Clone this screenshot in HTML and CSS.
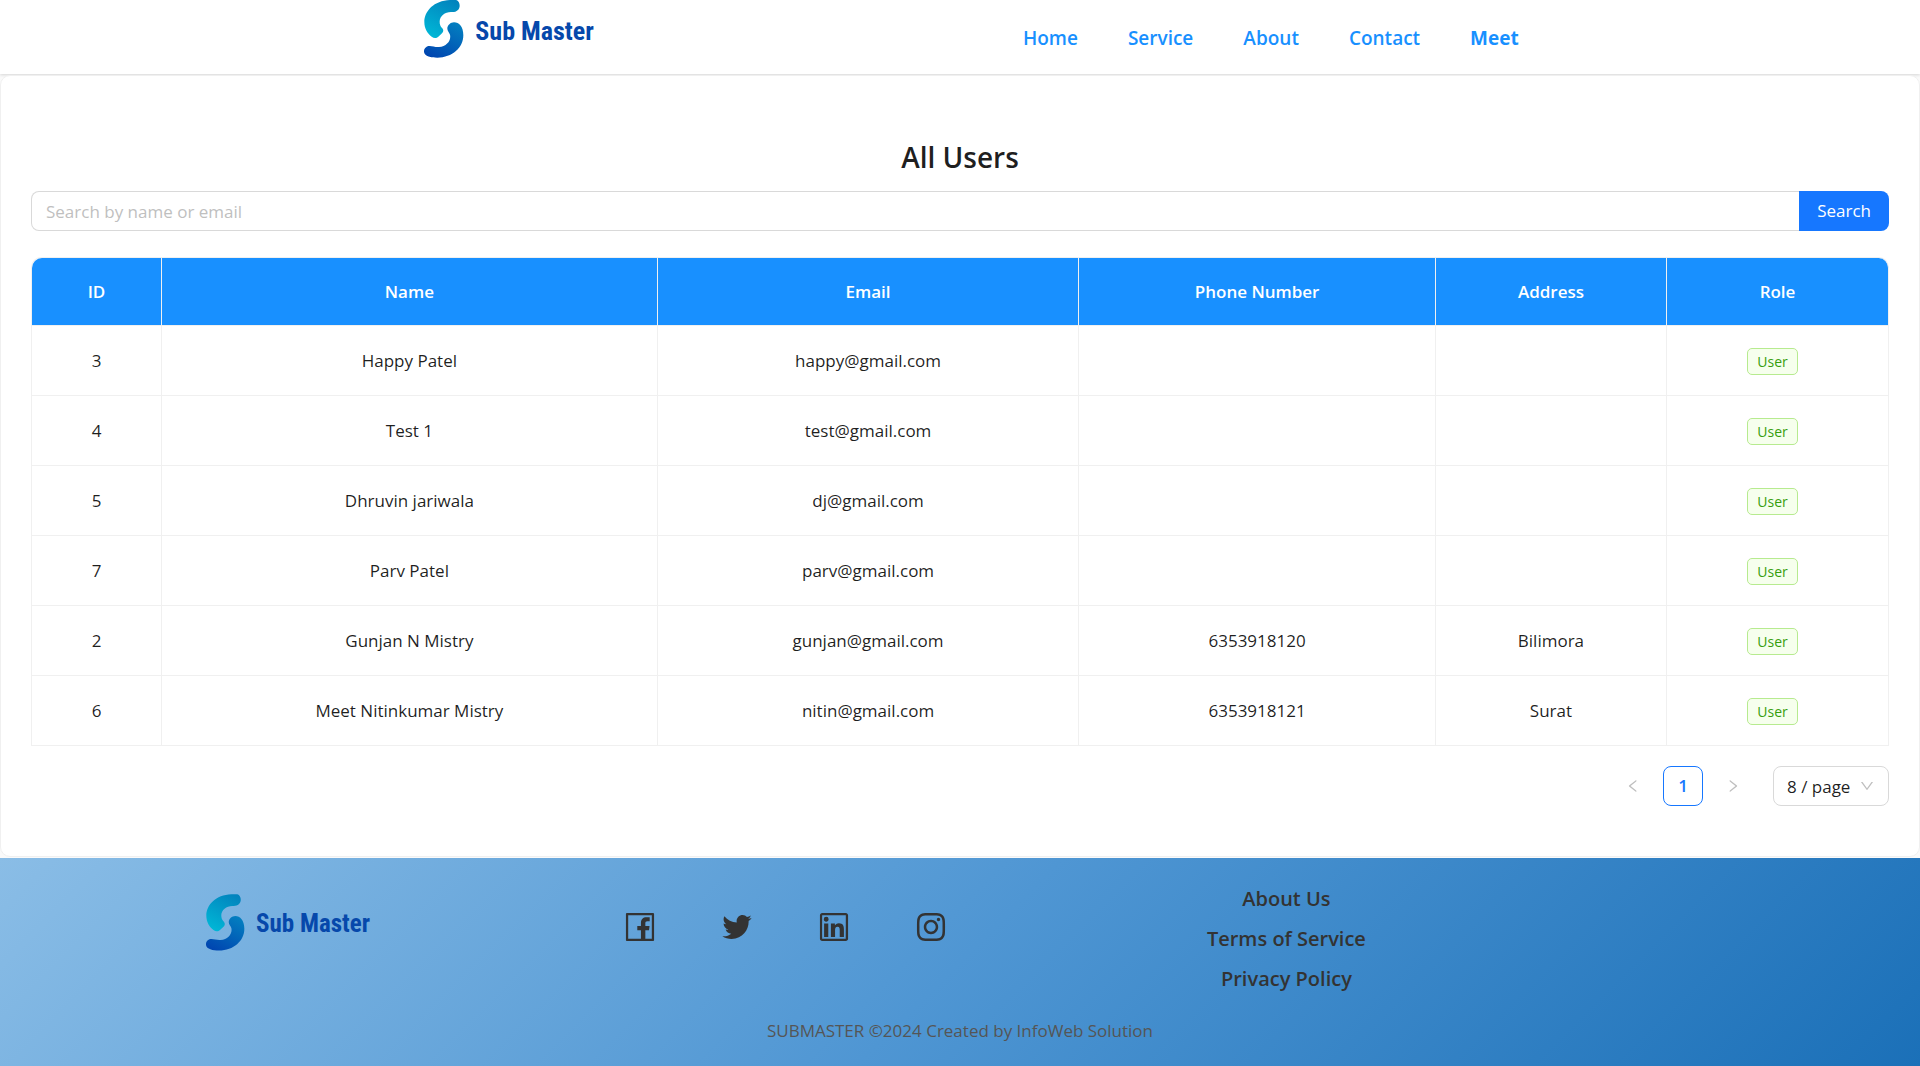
FILE: index.html
```html
<!DOCTYPE html>
<html lang="en">
<head>
<meta charset="utf-8">
<title>Sub Master - All Users</title>
<meta name="viewport" content="width=device-width, initial-scale=1">
<link rel="stylesheet" href="styles.css">
</head>
<body>
<svg class="sprite" aria-hidden="true">
  <defs>
    <linearGradient id="mark-top" x1="0.8" y1="0" x2="0.3" y2="1"><stop offset="0" stop-color="#0283bd"/><stop offset="1" stop-color="#00b6d6"/></linearGradient>
    <linearGradient id="mark-bottom" x1="0.8" y1="0" x2="0.2" y2="1"><stop offset="0" stop-color="#037fc0"/><stop offset="1" stop-color="#0045b0"/></linearGradient>
    <symbol id="mark" viewBox="0 0 120 174">
      <path fill="url(#mark-top)" d="M93 0H78C30 2 1 33 1 66c0 20 10 35 22 44 7 6 15 5 20 0l11-10c5-5 5-10 1-15-6-6-8-12-8-20 0-17 17-30 36-29 14 1 24-7 24-19C107 6 101 0 93 0Z"/>
      <path fill="url(#mark-bottom)" d="M90 67c-10 0-20 9-20 19 0 7 6 11 8 18 4 18-10 35-33 37-11 1-19-3-28-3C7 138-1 146 0 156c2 13 21 17 40 17 45 0 78-30 78-67 0-26-13-39-28-39Z"/>
    </symbol>
  </defs>
</svg>

<header class="site-header">
  <a class="logo" href="#"><svg class="logo-mark" aria-hidden="true"><use href="#mark"/></svg><span class="logo-name">Sub Master</span></a>
  <nav class="site-nav">
    <a href="#">Home</a>
    <a href="#">Service</a>
    <a href="#">About</a>
    <a href="#">Contact</a>
    <a class="account" href="#">Meet</a>
  </nav>
</header>

<main class="card">
  <h1>All Users</h1>
  <form class="search">
    <input type="search" aria-label="Search by name or email" placeholder="Search by name or email">
    <button type="button">Search</button>
  </form>
  <table class="users">
    <colgroup><col class="c-id"><col class="c-name"><col class="c-email"><col class="c-phone"><col class="c-address"><col class="c-role"></colgroup>
    <thead>
      <tr><th>ID</th><th>Name</th><th>Email</th><th>Phone Number</th><th>Address</th><th>Role</th></tr>
    </thead>
    <tbody>
      <tr><td>3</td><td>Happy Patel</td><td>happy@gmail.com</td><td></td><td></td><td><span class="tag">User</span></td></tr>
      <tr><td>4</td><td>Test 1</td><td>test@gmail.com</td><td></td><td></td><td><span class="tag">User</span></td></tr>
      <tr><td>5</td><td>Dhruvin jariwala</td><td>dj@gmail.com</td><td></td><td></td><td><span class="tag">User</span></td></tr>
      <tr><td>7</td><td>Parv Patel</td><td>parv@gmail.com</td><td></td><td></td><td><span class="tag">User</span></td></tr>
      <tr><td>2</td><td>Gunjan N Mistry</td><td>gunjan@gmail.com</td><td>6353918120</td><td>Bilimora</td><td><span class="tag">User</span></td></tr>
      <tr><td>6</td><td>Meet Nitinkumar Mistry</td><td>nitin@gmail.com</td><td>6353918121</td><td>Surat</td><td><span class="tag">User</span></td></tr>
    </tbody>
  </table>
  <div class="pagination">
    <button type="button" class="page-step" aria-label="Previous page" disabled><svg viewBox="0 0 1024 1024"><path d="M724 218.3V141c0-6.7-7.7-10.4-12.9-6.3L260.3 486.8a31.86 31.86 0 000 50.3l450.8 352.1c5.3 4.1 12.9.4 12.9-6.3v-77.3c0-4.9-2.3-9.6-6.1-12.6l-360-281 360-281.1c3.8-3 6.1-7.7 6.1-12.6z"/></svg></button>
    <button type="button" class="page-current">1</button>
    <button type="button" class="page-step" aria-label="Next page" disabled><svg viewBox="0 0 1024 1024"><path d="M765.7 486.8L314.9 134.7A7.97 7.97 0 00302 141v77.3c0 4.9 2.3 9.6 6.1 12.6l360 281.1-360 281.1c-3.9 3-6.1 7.7-6.1 12.6V883c0 6.7 7.7 10.4 12.9 6.3l450.8-352.1a31.96 31.96 0 000-50.4z"/></svg></button>
    <div class="page-size">
      <select aria-label="Rows per page"><option>8 / page</option></select>
      <svg viewBox="0 0 1024 1024" aria-hidden="true"><path d="M884 256h-75c-5.1 0-9.9 2.5-12.9 6.6L512 654.2 227.9 262.6c-3-4.1-7.8-6.6-12.9-6.6h-75c-6.5 0-10.3 7.4-6.5 12.7l352.6 486.1c12.8 17.6 39 17.6 51.7 0l352.6-486.1c3.9-5.3.1-12.7-6.4-12.7z"/></svg>
    </div>
  </div>
</main>

<footer class="site-footer">
  <div class="footer-columns">
    <a class="logo" href="#"><svg class="logo-mark" aria-hidden="true"><use href="#mark"/></svg><span class="logo-name">Sub Master</span></a>
    <div class="social">
      <a href="#" aria-label="Facebook"><svg viewBox="0 0 1024 1024"><path d="M880 112H144c-17.7 0-32 14.3-32 32v736c0 17.7 14.3 32 32 32h736c17.7 0 32-14.3 32-32V144c0-17.7-14.3-32-32-32zm-32 736H663.9V602.2h104l15.6-120.7H663.9v-77.1c0-35 9.7-58.8 59.8-58.8h63.9v-108c-11.1-1.5-49-4.8-93.2-4.8-92.2 0-155.3 56.3-155.3 159.6v89H434.9v120.7h104.3V848H176V176h672v672z"/></svg></a>
      <a href="#" aria-label="Twitter"><svg viewBox="0 0 1024 1024"><path d="M928 254.3c-30.6 13.2-63.9 22.7-98.2 26.4a170.1 170.1 0 0075-94 336.64 336.64 0 01-108.2 41.2A170.1 170.1 0 00672 174c-94.5 0-170.5 76.6-170.5 170.6 0 13.2 1.6 26.4 4.2 39.1-141.5-7.4-267.7-75-351.6-178.5a169.32 169.32 0 00-23.2 86.1c0 59.2 30.1 111.4 76 142.1a172 172 0 01-77.1-21.7v2.1c0 82.9 58.6 151.6 136.7 167.4a180.6 180.6 0 01-44.9 5.8c-11.1 0-21.6-1.1-32.2-2.6C211 652 273.9 701.1 348.8 702.7c-58.6 45.9-132 72.9-211.7 72.9-14.3 0-27.5-.5-41.2-2.1C171.5 822 261.2 850 357.8 850 671.4 850 843 590.2 843 364.7c0-7.4 0-14.8-.5-22.2 33.2-24.3 62.3-54.4 85.5-88.2z"/></svg></a>
      <a href="#" aria-label="LinkedIn"><svg viewBox="0 0 1024 1024"><path d="M847.7 112H176.3c-35.5 0-64.3 28.8-64.3 64.3v671.4c0 35.5 28.8 64.3 64.3 64.3h671.4c35.5 0 64.3-28.8 64.3-64.3V176.3c0-35.5-28.8-64.3-64.3-64.3zm0 736c-447.8-.1-671.7-.2-671.7-.3.1-447.8.2-671.7.3-671.7 447.8.1 671.7.2 671.7.3-.1 447.8-.2 671.7-.3 671.7zM230.6 411.9h118.7v381.8H230.6zm59.4-52.2c37.9 0 68.8-30.8 68.8-68.8a68.8 68.8 0 10-137.6 0c-.1 38 30.7 68.8 68.8 68.8zm252.3 245.1c0-49.8 9.5-98 71.2-98 60.8 0 61.7 56.9 61.7 101.2v185.7h118.6V584.3c0-102.8-22.2-181.9-142.3-181.9-57.7 0-96.4 31.7-112.3 61.7h-1.6v-52.2H423.7v381.8h118.6V604.8z"/></svg></a>
      <a href="#" aria-label="Instagram"><svg viewBox="0 0 1024 1024"><path d="M512 306.9c-113.5 0-205.1 91.6-205.1 205.1S398.5 717.1 512 717.1 717.1 625.5 717.1 512 625.5 306.9 512 306.9zm0 338.4c-73.4 0-133.3-59.9-133.3-133.3S438.6 378.7 512 378.7 645.3 438.6 645.3 512 585.4 645.3 512 645.3zm213.5-394.6c-26.5 0-47.9 21.4-47.9 47.9s21.4 47.9 47.9 47.9 47.9-21.3 47.9-47.9a47.84 47.84 0 00-47.9-47.9zM911.8 512c0-55.2.5-109.9-2.6-165-3.1-64-17.7-120.8-64.5-167.6-46.9-46.9-103.6-61.4-167.6-64.5-55.2-3.1-109.9-2.6-165-2.6-55.2 0-109.9-.5-165 2.6-64 3.1-120.8 17.7-167.6 64.5C132.6 226.3 118.1 283 115 347c-3.1 55.2-2.6 109.9-2.6 165s-.5 109.9 2.6 165c3.1 64 17.7 120.8 64.5 167.6 46.9 46.9 103.6 61.4 167.6 64.5 55.2 3.1 109.9 2.6 165 2.6 55.2 0 109.9.5 165-2.6 64-3.1 120.8-17.7 167.6-64.5 46.9-46.9 61.4-103.6 64.5-167.6 3.2-55.1 2.6-109.8 2.6-165zm-88 235.8c-7.3 18.2-16.1 31.8-30.2 45.8-14.1 14.1-27.6 22.9-45.8 30.2C695.2 844.7 570.3 840 512 840c-58.3 0-183.3 4.7-235.9-16.1-18.2-7.3-31.8-16.1-45.8-30.2-14.1-14.1-22.9-27.6-30.2-45.8C179.3 695.2 184 570.3 184 512c0-58.3-4.7-183.3 16.1-235.9 7.3-18.2 16.1-31.8 30.2-45.8s27.6-22.9 45.8-30.2C328.7 179.3 453.7 184 512 184s183.3-4.7 235.9 16.1c18.2 7.3 31.8 16.1 45.8 30.2 14.1 14.1 22.9 27.6 30.2 45.8C844.7 328.7 840 453.7 840 512c0 58.3 4.7 183.2-16.2 235.8z"/></svg></a>
    </div>
    <nav class="footer-links">
      <a href="#">About Us</a>
      <a href="#">Terms of Service</a>
      <a href="#">Privacy Policy</a>
    </nav>
  </div>
  <p class="copyright">SUBMASTER ©2024 Created by InfoWeb Solution</p>
</footer>
</body>
</html>
```
FILE: styles.css
```css
* { box-sizing: border-box; }

body {
  margin: 0;
  min-height: 100vh;
  display: flex;
  flex-direction: column;
  background: #fafafa;
  color: rgba(0, 0, 0, 0.88);
  font: 17px/28px "Segoe UI", "Open Sans", "Noto Sans", sans-serif;
}

a { color: inherit; text-decoration: none; }
button, input, select { font: inherit; color: inherit; }
svg { display: block; fill: currentColor; }
.sprite { position: absolute; width: 0; height: 0; }

/* Brand */
.logo {
  display: flex;
  align-items: center;
  gap: 11px;
  color: #0648ab;
  font: bold 26px/58px "Roboto Condensed", "Liberation Sans Narrow", Roboto, sans-serif;
}
.logo-mark { width: 40px; height: 58px; }
.logo-name { padding-top: 3px; line-height: 56px; }

/* Header */
.site-header {
  display: flex;
  justify-content: space-between;
  align-items: flex-start;
  height: 74px;
  padding: 0 20.9% 0 22.1%;
  background: #fff;
  box-shadow: 0 1px 3px rgba(0, 0, 0, 0.15);
}
.site-header .logo { height: 58px; }
.site-nav {
  display: flex;
  gap: 50px;
  color: #1890ff;
  font-size: 19px;
  font-weight: 600;
  line-height: 76px;
}
.account { font-weight: 700; }

/* Content card */
.card {
  flex: 1;
  margin-top: 1px;
  padding: 61px 30px 49px;
  background: #fff;
  border: 1px solid #f0f0f0;
  border-radius: 10px;
}
h1 {
  margin: 0 0 14px;
  font-size: 28px;
  font-weight: 600;
  line-height: 40px;
  text-align: center;
}
.search { display: flex; margin-bottom: 26px; }
.search input {
  flex: 1;
  height: 40px;
  padding: 0 14px;
  background: #fff;
  border: 1px solid #d9d9d9;
  border-right: 0;
  border-radius: 8px 0 0 8px;
  appearance: none;
}
.search input::placeholder { color: #bfbfbf; opacity: 1; }
.search button {
  height: 40px;
  padding: 0 18px;
  border: 0;
  border-radius: 0 8px 8px 0;
  background: #1677ff;
  color: #fff;
}

/* Users table */
.users {
  width: 100%;
  table-layout: fixed;
  border-collapse: separate;
  border-spacing: 0;
  border: 1px solid #f0f0f0;
  border-width: 1px 0 0 1px;
  border-radius: 10px 10px 0 0;
  text-align: center;
}
.c-id { width: 7%; }
.c-name { width: 26.7%; }
.c-email { width: 22.7%; }
.c-phone { width: 19.2%; }
.c-address { width: 12.45%; }
.c-role { width: 11.95%; }
.users th,
.users td {
  padding: 0 20px;
  border: 1px solid #f0f0f0;
  border-width: 0 1px 1px 0;
}
.users th { height: 68px; background: #1890ff; color: #fff; font-weight: 600; }
.users td { height: 70px; }
.users th:first-child { border-top-left-radius: 10px; }
.users th:last-child { border-top-right-radius: 10px; }
.tag {
  display: inline-block;
  margin-right: 10px;
  padding: 0 9px;
  border: 1px solid #b7eb8f;
  border-radius: 5px;
  background: #f6ffed;
  color: #389e0d;
  font-size: 14px;
  line-height: 25px;
}

/* Pagination */
.pagination {
  display: flex;
  justify-content: flex-end;
  gap: 10px;
  margin-top: 20px;
}
.pagination button {
  display: grid;
  place-items: center;
  width: 40px;
  height: 40px;
  padding: 0;
  border: 0;
  background: none;
}
.pagination svg { width: 16px; height: 16px; fill: #bfbfbf; }
.pagination .page-current {
  border: 1px solid #1677ff;
  border-radius: 8px;
  background: #fff;
  color: #1677ff;
  font-weight: 600;
}
.page-size { display: grid; align-items: center; margin-left: 10px; }
.page-size > * { grid-area: 1 / 1; }
.page-size select {
  width: 116px;
  height: 40px;
  padding: 2px 13px 0;
  border: 1px solid #d9d9d9;
  border-radius: 8px;
  background: #fff;
  appearance: none;
}
.page-size svg { justify-self: end; margin-right: 14px; pointer-events: none; }

/* Footer */
.site-footer {
  margin-top: 1px;
  padding: 21px 0;
  background: linear-gradient(135deg, #8abde6 0%, #4f96d3 50%, #1b70b8 100%);
  color: #333;
}
.footer-columns {
  display: grid;
  grid-template-columns: repeat(3, 1fr);
  align-items: start;
  padding: 0 20% 0 2%;
}
.site-footer .logo { justify-content: center; padding-top: 14px; font-size: 25px; }
.site-footer .logo-mark { width: 39px; height: 57px; }
.social { display: flex; justify-content: center; gap: 61px; padding: 30px 4px 0 0; }
.social svg { width: 36px; height: 36px; }
.footer-links {
  display: flex;
  flex-direction: column;
  align-items: center;
  font-size: 20px;
  font-weight: 600;
  line-height: 40px;
}
.copyright { margin: 18px 0 0; color: #555; text-align: center; }
```
